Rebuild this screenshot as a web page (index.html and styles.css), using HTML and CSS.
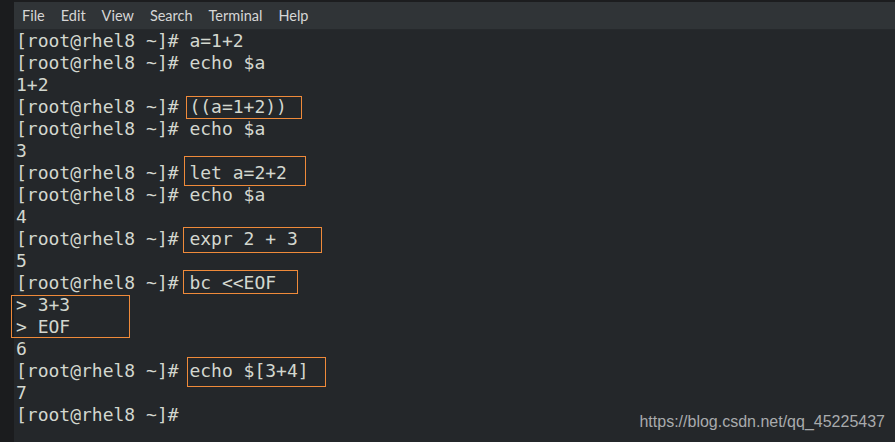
FILE: index.html
```html
<!DOCTYPE html>
<html>
<head>
    <title>Terminal</title>
    <link rel="stylesheet" href="styles.css">
</head>
<body>
    <div class="window">
        <div class="gutter"></div>
        <div class="main">
            <div class="menubar">
                <span class="menu-item">File</span>
                <span class="menu-item">Edit</span>
                <span class="menu-item">View</span>
                <span class="menu-item">Search</span>
                <span class="menu-item">Terminal</span>
                <span class="menu-item">Help</span>
            </div>
            <div class="term">
                <div class="line">[root@rhel8 ~]# a=1+2</div>
                <div class="line">[root@rhel8 ~]# echo $a</div>
                <div class="line">1+2</div>
                <div class="line">[root@rhel8 ~]# ((a=1+2))</div>
                <div class="line">[root@rhel8 ~]# echo $a</div>
                <div class="line">3</div>
                <div class="line">[root@rhel8 ~]# let a=2+2</div>
                <div class="line">[root@rhel8 ~]# echo $a</div>
                <div class="line">4</div>
                <div class="line">[root@rhel8 ~]# expr 2 + 3</div>
                <div class="line">5</div>
                <div class="line">[root@rhel8 ~]# bc &lt;&lt;EOF</div>
                <div class="line">&gt; 3+3</div>
                <div class="line">&gt; EOF</div>
                <div class="line">6</div>
                <div class="line">[root@rhel8 ~]# echo $[3+4]</div>
                <div class="line">7</div>
                <div class="line">[root@rhel8 ~]#</div>

                <!-- highlight marks drawn over the screenshot -->
                <div class="mark mark-1"></div>
                <div class="mark mark-2"></div>
                <div class="mark mark-3"></div>
                <div class="mark mark-4"></div>
                <div class="mark mark-5"></div>
                <div class="mark mark-6"></div>

                <div class="watermark">https://blog.csdn.net/qq_45225437</div>
            </div>
        </div>
    </div>
</body>
</html>
```

FILE: styles.css
```css
html, body { margin: 0; padding: 0; background: #24272a; }
.window { display: flex; width: 895px; height: 442px; overflow: hidden; }
.gutter { width: 14px; background: #1b1c1e; flex-shrink: 0; }
.main { flex: 1; display: flex; flex-direction: column; }
.menubar { height: 27px; border-top: 2px solid #1c1d1f; background: #303437; display: flex; align-items: center; padding-left: 8px; font-family: Lato, "DejaVu Sans", sans-serif; font-size: 14.5px; color: #d6d6d6; border-bottom: 1px solid #26292c; }
.menu-item { margin-right: 16px; }
.term { position: relative; flex: 1; background: #24272a; padding: 0 0 0 2px; font-family: "DejaVu Sans Mono", monospace; font-size: 18px; color: #d3d7cf; }
.line { height: 22px; line-height: 22px; white-space: pre; }
.mark { position: absolute; border: 1px solid #ef8a3a; }
.mark-1 { left: 172px; top: 66px; width: 114px; height: 21px; }
.mark-2 { left: 170px; top: 126px; width: 120px; height: 28px; }
.mark-3 { left: 169px; top: 197px; width: 137px; height: 24px; }
.mark-4 { left: 169px; top: 240px; width: 113px; height: 22px; }
.mark-5 { left: -3px; top: 265px; width: 117px; height: 41px; }
.mark-6 { left: 173px; top: 327px; width: 137px; height: 28px; }
.watermark { position: absolute; right: 10px; bottom: 11px; font-family: "Liberation Sans", Arial, sans-serif; font-size: 16px; color: #a9abad; }
```
